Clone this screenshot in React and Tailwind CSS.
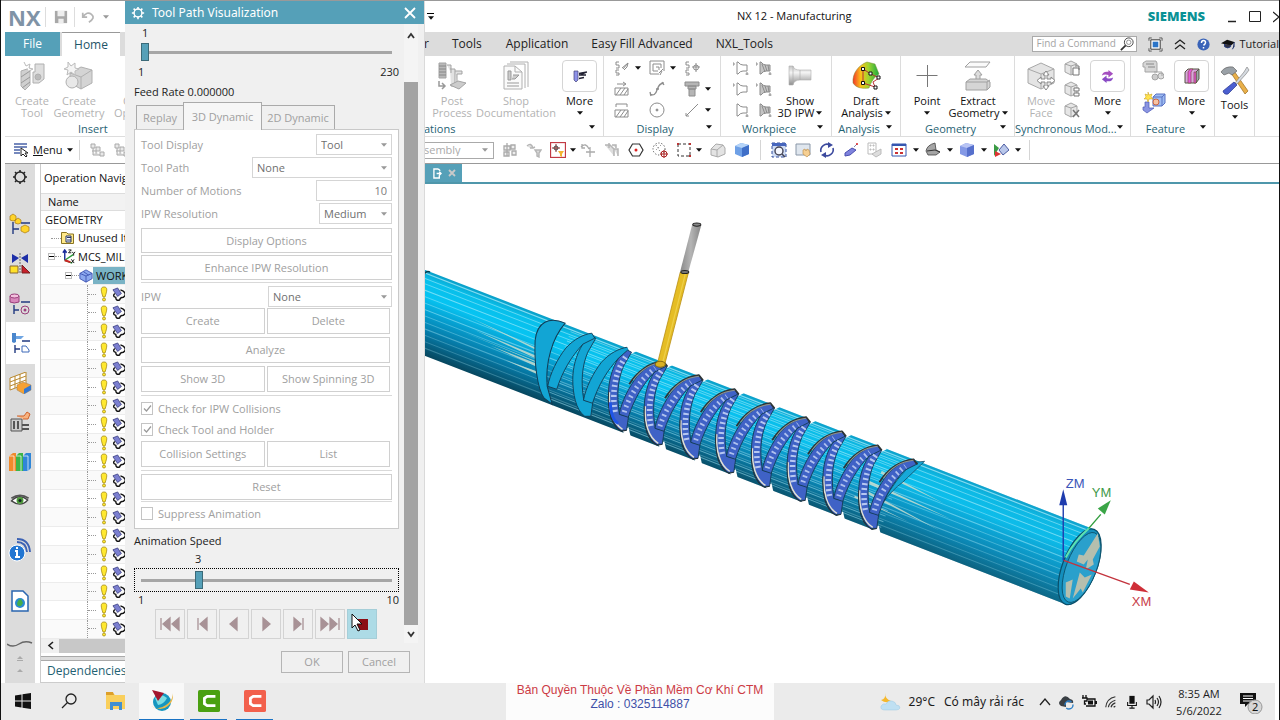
import React from "react";
import clsx from "clsx";

const Svg = ({ w = 16, h = w, vb = "0 0 16 16", className, children, ...rest }) => (
  <svg width={w} height={h} viewBox={vb} fill="none" aria-hidden="true" className={clsx("shrink-0", className)} {...rest}>
    {children}
  </svg>
);

const Caret = ({ color = "#111" }) => (
  <Svg w={6} h={4} vb="0 0 7 4"><path d="M0 0h7L3.5 4z" fill={color} /></Svg>
);

/* ---------- ribbon drawings ---------- */
const ToolBlock = () => (
  <Svg w={30} vb="0 0 30 30" stroke="#b0b0b0">
    <path d="M18 3h9v15l-5 4h-6V11h2z" fill="#dedede" /><circle cx="21" cy="16" r="3" fill="#bbb" />
    <path d="M4 10l9-3v17l-5 5-4-4z" fill="#d0d0d0" /><path d="M4 16l9-6M4 22l9-6M5 27l8-6" stroke="#999" />
    <path d="M7 1l2 4 4-2-1 4 4 1-4 2" fill="#fff" stroke="#bbb" />
  </Svg>
);
const GeoBlock = () => (
  <Svg w={30} vb="0 0 30 30" stroke="#b0b0b0">
    <path d="M6 12l11-6 11 3v13l-11 6-11-6z" fill="#d4d4d4" /><path d="M6 12l11 4 11-7M17 16v12" />
    <circle cx="8" cy="21" r="6" fill="#e8e8e8" /><path d="M4 1l3 4 4-3v5l4 1-4 2v4l-4-3-4 3 1-5-4-1 4-2z" fill="#f4f4f4" stroke="#bbb" />
  </Svg>
);
const PostIcon = () => (
  <Svg w={30} vb="0 0 30 30" stroke="#a3a3a3">
    <path d="M2 2h7v15H2z" fill="#b9b9b9" /><path d="M2 5h7M2 8h7M2 11h7M2 14h7" stroke="#888" />
    <path d="M10 4h4v8M13 8h5v17h-4M18 10h7v3h-5v9" fill="#e2e2e2" /><path d="M13 24l8-4 8 2-7 6z" fill="#ccc" />
    <path d="M2 20v5h6m-3-3l3 3-3 3" stroke="#999" strokeWidth="1.5" />
  </Svg>
);
const DocIcon = () => (
  <Svg w={30} vb="0 0 30 30" stroke="#b0b0b0">
    <path d="M9 1h18v25" /><path d="M6 3h18v24" /><path d="M3 5h11l7 6v17H3z" fill="#fafafa" /><path d="M14 5v6h7" />
    <path d="M7 10h3v9H7zM12 14h6l-4 4h-3M6 22h12M6 25h12" stroke="#999" fill="#ccc" />
  </Svg>
);
const IpwIcon = () => (
  <Svg w={26} h={22} vb="0 0 26 22">
    <defs><linearGradient id="ipw" x1="0" y1="0" x2="0" y2="1"><stop stopColor="#c4c4c4" /><stop offset=".35" stopColor="#f4f4f4" /><stop offset="1" stopColor="#8f8f8f" /></linearGradient></defs>
    <path d="M2 1h4q1 4 7 4h11v10H13q-6 0-7 5H2z" fill="url(#ipw)" stroke="#b0b0b0" strokeWidth=".6" /><path d="M6 1v19M13 5v10" stroke="#aaa" strokeWidth=".6" />
  </Svg>
);
const DraftIcon = () => (
  <Svg w={30} vb="0 0 30 30">
    <defs><linearGradient id="dr"><stop stopColor="#f3352b" /><stop offset=".3" stopColor="#fbc117" /><stop offset=".6" stopColor="#9ed530" /><stop offset="1" stopColor="#17a83e" /></linearGradient></defs>
    <path d="M2 22C1 12 8 4 16 1l8 2 4 10c-5 3-8 8-10 14-6 1-13 0-16-5z" fill="url(#dr)" stroke="#7a8c33" strokeWidth=".5" />
    <path d="M12 8v14M12 8l8 5M12 22l12 4M20 13l8 4-6 4 2 5" stroke="#b33" /><path d="M10.500 6.500h3v3h-3zM10.500 20.500h3v3h-3zM23 25h3v3h-3zM26 15h3v3h-3zM18 11h3v3h-3z" fill="#fff" stroke="#111" />
  </Svg>
);
const PointIcon = () => <Svg w={24} vb="0 0 24 24" stroke="#777"><path d="M12.500 1v22M1.500 11.500h21" /></Svg>;
const ExtractIcon = () => (
  <Svg w={30} vb="0 0 30 30" stroke="#a0a0a0">
    <path d="M7 1h20l-4 5H2z" fill="#fafafa" /><path d="M15 9l4 5h-2v7h-4v-7h-2z" fill="#ddd" />
    <path d="M3 21l4-3h16l4 3v5l-3 3H3z" fill="#d5d5d5" /><path d="M3 21h21v8M24 21l3-2" />
  </Svg>
);
const MoveFace = () => (
  <Svg w={30} vb="0 0 30 30" stroke="#a8a8a8">
    <path d="M2 8l13-6 13 6v14l-13 6-13-6z" fill="#e4e4e4" /><path d="M2 8l13 5 13-5M15 13v15" />
    <path d="M20 10l3 4h-2v4h4v-2l4 3.500-4 3.500v-2h-4v4h2l-3 4-3-4h2v-4h-4v2l-4-3.500 4-3.500v2h4v-4h-2z" fill="#fff" stroke="#888" />
  </Svg>
);
const SmallCube = ({ kind }) => (
  <Svg w={16} stroke="#a5a5a5">
    <path d="M1 4l6-3 6 3v8l-6 3-6-3z" fill="#e6e6e6" /><path d="M1 4l6 2 6-2M7 6v9" />
    {kind === 0 && <path d="M9 8h6v7H9zM11 6h4v4" fill="#fff" stroke="#777" />}
    {kind === 1 && <path d="M10 7h5v3h-5zM10 12h5v3h-5z" fill="#fff" stroke="#777" />}
    {kind === 2 && <path d="M9 8l6 7M15 8l-6 7" stroke="#777" strokeWidth="1.500" />}
  </Svg>
);
const SyncIcon = () => (
  <Svg w={15}><path d="M2 7q1-5 7-4V1l5 4-5 4V6.500Q5 5 2 7z" fill="#a54fc0" /><path d="M14 9q-1 5-7 4v2l-5-4 5-4v2.500q4 1.500 7-.5z" fill="#8a4bc5" /></Svg>
);
const FeatIcon = () => (
  <Svg w={16}><path d="M1 4l3-3h11l-3 3v11H1z" fill="#d9a7dd" stroke="#554" /><path d="M12 4l3-3v10l-3 4z" fill="#9aa" stroke="#554" /><path d="M4 4l2-3h3L7 4v11H4zM10 4h2v11h-2z" fill="#e45adb" stroke="#743" strokeWidth=".6" /></Svg>
);
const MoreMachining = () => (
  <Svg w={16}><path d="M2 3h4v9l-2 2-2-2z" fill="#8f93e8" stroke="#447" strokeWidth=".7" /><path d="M15 4L7 5.500M14 7H7M12 9.500l-5 1M15 4L8 7" stroke="#223" strokeWidth="1.300" /></Svg>
);
const FeatTop = () => (
  <Svg w={22} vb="0 0 22 22" stroke="#a5a5a5"><path d="M1 3l3-2h10l1 2v9H3V7H1z" fill="#d6d6d6" /><path d="M4 4h8M6 7h7" stroke="#888" /><circle cx="13" cy="17" r="3" fill="#ccc" /><circle cx="19" cy="16" r="3" fill="#ddd" /><path d="M12 12h8v4" /></Svg>
);
const FeatBottom = () => (
  <Svg w={24} vb="0 0 24 22"><path d="M11 6l3-3h9v9l-3 3h-9z" fill="#9dbcf2" stroke="#5a73c4" /><path d="M11 6h9v9M20 6l3-3" stroke="#5a73c4" /><circle cx="14" cy="11" r="3" fill="#f7c3a4" stroke="#c64" /><path d="M3 11h4v6h5l-7 5-4-3V16h2z" fill="#8b95e2" stroke="#4b59b5" strokeWidth=".7" /><path d="M6 1l1 3 3-1-1 3 2 2H7l-1 3-1-3H2l2-2-1-3 3 1z" fill="#ffe34d" stroke="#c59a1a" strokeWidth=".5" /></Svg>
);
const ToolsIcon = () => (
  <Svg w={30} vb="0 0 30 30">
    <path d="M11 8l3-2 14 20-3 3z" fill="#e9b04a" stroke="#9b6c1c" strokeWidth=".7" /><path d="M1 7Q5 1 13 2l4 4-5 4-3-2-5 2z" fill="#9aa1a7" stroke="#666" strokeWidth=".7" />
    <path d="M24 7l3-5 2 3-3 4-9 10-2-1z" fill="#d5dae0" stroke="#888" strokeWidth=".7" /><path d="M14 17l3 3-9 9q-4 1-5-3z" fill="#4b5fd0" stroke="#2a388e" strokeWidth=".7" />
  </Svg>
);

const G = "#8c8c8c";
const smallDisplay = [
  <Svg key="a" stroke={G}><path d="M5 2H2v3h3v3H2M5 10H2v3h3v2H2M8 8l6-5M9 9l5-6-1 4-3 3" /></Svg>,
  <Svg key="b" stroke={G}><path d="M1 1h14v10M1 1v13h9M4 4h8v4M4 4v7h5M7 7h3v3M10 13l4-4M13 11l-2 4" /></Svg>,
  <Svg key="c" stroke={G}><path d="M5 2H2v3h3v3H2M5 10H2v3h3v2H2M12 3v9M8 7h8" /><circle cx="12" cy="7.500" r="2.500" /></Svg>,
  <Svg key="d" stroke={G}><path d="M3 3h8M9 1l3 2-3 2M1 7h13v7H1zM2 14l5-7M6 14l5-7M10 14l4-6" /></Svg>,
  <Svg key="e" stroke={G} strokeWidth="1.300"><path d="M1 13q5 3 7-4t7-7M13 1l2 3M1 11l1 4M7 8h3" /></Svg>,
  <Svg key="f" stroke={G}><path d="M1 1h14v4H1zM4 5h8v3H4zM5 8h6v7H5z" fill="#b5b5b5" /></Svg>,
  <Svg key="g" stroke={G}><path d="M2 5V2h11v3M1 8h13v7H1zM2 15l5-7M6 15l5-7M10 15l4-6" /></Svg>,
  <Svg key="h" stroke={G}><circle cx="8" cy="8" r="7" /><circle cx="8" cy="8" r="1" fill={G} /></Svg>,
  <Svg key="i" stroke={G}><path d="M2 14L14 2M2 11v3h3" /></Svg>,
];
const Funnel = ({ arrow, hatch, tail }) => (
  <Svg stroke={G}>
    {arrow && <path d="M0 2v4M0 4h2" />}
    <path d="M4 2h1q2 3 5 3h4v6h-4q-3 0-5 3H4z" fill={hatch ? "#c4c4c4" : "none"} />
    {hatch && <path d="M6 4l3 8M9 5l2 6M12 5l1 6" />}{tail && <path d="M14 12v3M12.500 14h3" />}
  </Svg>
);

/* ---------- ribbon parts ---------- */
const Big = ({ icon, lines, caret, off, className }) => (
  <button type="button" disabled={off} className={clsx("flex shrink-0 flex-col items-center text-[11px] leading-3", off ? "text-[#b3b3b3]" : "text-[#111]", className)}>
    <span className="flex h-8 items-center justify-center">{icon}</span>
    <span className="mt-[3px] whitespace-nowrap">{lines[0]}</span>
    {lines[1] ? <span className="flex items-center gap-0.5 whitespace-nowrap">{lines[1]}{caret && <Caret />}</span> : caret && <span className="mt-1"><Caret /></span>}
  </button>
);
const More = ({ icon, className }) => (
  <button type="button" className={clsx("flex shrink-0 flex-col items-center text-[11px] leading-3 text-[#111]", className)}>
    <span className="flex h-8 w-[35px] items-center justify-center rounded border border-[#d5d5d5] bg-white">{icon}</span>
    <span className="mt-[3px]">More</span>
    <span className="mt-1"><Caret /></span>
  </button>
);
const Group = ({ label, caret = true, className, labelClass, children }) => (
  <section className={clsx("flex h-full shrink-0 flex-col border-r border-[#dcdcdc] pt-1", className)}>
    <div className="flex flex-1 items-start gap-1">{children}</div>
    <div className="flex h-[14px] items-center whitespace-nowrap text-[11px] text-[#1f6273]">
      <span className={clsx("flex-1 text-center", labelClass)}>{label}</span>
      {caret && <span className="flex pr-2 pb-1"><Caret /></span>}
    </div>
  </section>
);

/* ---------- quick toolbar ---------- */
const Cell = ({ children, label }) => <button type="button" aria-label={label} className="flex h-6 w-6 shrink-0 items-center justify-center">{children}</button>;
const Drop = ({ wide }) => <span className={clsx("flex shrink-0 justify-center", wide ? "w-2.5" : "w-1.5")}><Caret /></span>;
const VBar = () => <span className="mx-[6px] h-5 w-px shrink-0 bg-[#d5d5d5]" />;
const Cube = ({ a = "#b5d4f8", b = "#6ea0e6", c = "#3f6fc8" }) => (
  <Svg><path d="M1 4l6-3 8 2v9l-7 3-7-3z" fill={b} /><path d="M1 4l6-3 8 2-7 3z" fill={a} /><path d="M8 6l7-3v9l-7 3z" fill={c} /></Svg>
);

const quick = {
  tree: <Svg stroke="#aaa"><path d="M1 2h4v4H1zM6 5h4v4H6zM10 10h4v4h-4zM3 6v7h7M2 9h4v3" fill="#e8e8e8" /></Svg>,
  sel: <Svg stroke="#aaa" strokeWidth="1.300"><path d="M5 1v13M2 4h6v4H2zM2 10h5v4H2zM9 3h4v4H9zM10 9h4v4h-4z" fill="#eee" /></Svg>,
  hook: <Svg stroke="#b5b5b5" strokeWidth="1.400"><path d="M1 4q4-4 6 2L4 6M7 6l2-1M9 8h6l-2 3v4l-2-1v-3z" fill="#ddd" /></Svg>,
  boxed: <Svg><rect x=".5" y=".5" width="15" height="15" fill="#fff" stroke="#c23b45" strokeWidth="1.300" /><path d="M6 2v8M2 6h8" stroke="#8a2b2b" /><circle cx="6" cy="6" r="2" stroke="#444" /><path d="M8 9h6l-2 3v3l-2-1v-2z" fill="#f3b431" /></Svg>,
  arc: <Svg stroke="#aaa" strokeWidth="1.300"><path d="M1 5q5-5 8 2M2 2v4h3M10 5v10M6 10h9" /></Svg>,
  pipe: <Svg stroke="#b5b5b5" strokeWidth="1.500"><path d="M1 3h5l4 4v7M5 1v5M10 7h4v7M8 3h4v3" fill="#ddd" /></Svg>,
  hex: <Svg><path d="M4.500 2h7L15 8l-3.500 6h-7L1 8z" stroke="#333" strokeWidth="1.200" /><circle cx="8" cy="8" r="1.500" fill="#d22" /></Svg>,
  dots: <Svg><circle cx="7" cy="7" r="6" stroke="#333" strokeDasharray="1 2" /><path d="M4 3l5 8M9 3L3 9" stroke="#777" strokeDasharray="1 2" /><circle cx="12" cy="12" r="3" stroke="#a22" /><path d="M12 8v8M8 12h8" stroke="#a22" /></Svg>,
  rect: <Svg><rect x="2" y="2" width="12" height="12" stroke="#333" strokeDasharray="3 2" /><path d="M1 1h2v2H1zM13 13h2v2h-2zM13 1h2v2h-2z" fill="#b33" /></Svg>,
  gcube: <Svg stroke="#aaa"><path d="M1 7l5-5 7 1 2 3v6l-7 3-7-2z" fill="#e3e3e3" /><path d="M1 7l6 1 6-5M7 8v7" /></Svg>,
  fit: <Svg><path d="M1 1h14v14H1z" fill="#cfdcf4" stroke="#334f9c" strokeDasharray="3 2" /><path d="M1 1h14v3H1z" fill="#4766bd" /><circle cx="8" cy="9" r="4" fill="#f5f8ff" stroke="#445" strokeWidth="1.400" /><path d="M11 12l3 3" stroke="#445" strokeWidth="1.500" /></Svg>,
  hand: <Svg><path d="M1 2h14v11H1z" fill="#dfe6ee" stroke="#8a97a8" /><path d="M8 8l2-1 1 2 1-2 2 1 1 4-3 3-4-3z" fill="#f6cf92" stroke="#b98a45" strokeWidth=".6" /></Svg>,
  rot: <Svg stroke="#3c4a9e" strokeWidth="1.600"><path d="M2 10A6.200 6.200 0 0 1 11 3M14 6a6.200 6.200 0 0 1-9 7" /><path d="M9 0l5 3-5 3zM7 16l-5-3 5-3z" fill="#3c4a9e" stroke="none" /></Svg>,
  pen: <Svg><path d="M2 11l7-5 4 2-6 5-5 1z" fill="#7f83dd" stroke="#4a4fb0" /><path d="M11 5l3-3" stroke="#88a" /><circle cx="14" cy="2" r="1" fill="#d22" /></Svg>,
  gdoc: <Svg stroke="#bbb"><path d="M1 1h8v11H1z" fill="#fff" /><path d="M3 3h1v1H3zM6 3h1v1H6zM3 7h1v1H3zM6 7h1v1H6zM5 12l9-5v5l-5 3z" fill="#ddd" /></Svg>,
  grid: <Svg><path d="M1 2h14v12H1z" fill="#fff" stroke="#3556b0" /><path d="M1 2h14v2H1z" fill="#3556b0" /><path d="M4 6h3v2H4zM9 6h3v2H9zM4 10h3v2H4zM9 10h3v2H9z" fill="#c33" /></Svg>,
  dark: <Svg><path d="M1 9q1-6 9-8l1 7 4 2-4 3H3z" fill="#a5a5a5" stroke="#444" strokeWidth=".8" /><path d="M2 9l8-1 5 2" stroke="#333" /></Svg>,
  tri: <Svg><path d="M1 2l5 4-5 8z" fill="#3a9a44" /><path d="M2 9l6 3-6 3z" fill="#d33" /><path d="M11 2l5 6-6 5-4-5z" fill="#b9c7ea" stroke="#4a5aa0" /></Svg>,
};

/* ---------- resource bar ---------- */
const barIcons = [
  ["Roles settings", "h-[26px]", <Svg key="s" stroke="#222"><circle cx="8" cy="8" r="5" strokeWidth="1.500" /><path d="M8 1v2M8 13v2M1 8h2M13 8h2M3 3l1.500 1.500M11.500 11.500L13 13M3 13l1.500-1.500M11.500 4.500L13 3" strokeWidth="1.500" /></Svg>],
  ["Assembly navigator", "mt-4 h-9", <Svg key="1" w={22} vb="0 0 22 22"><path d="M1 3l3-2 3 2v4L4 8 1 7zM6 7l3-2 3 2v3l-3 1-3-1zM12 14l4-2 4 2v4l-4 2-4-2z" fill="#ffd42a" stroke="#a97a10" strokeWidth=".7" /><path d="M4 9v12M4 16h6M12 10h9" stroke="#223a80" strokeWidth="1.400" /></Svg>],
  ["Constraint navigator", "mt-1 h-9", <Svg key="2" w={22} vb="0 0 22 22"><path d="M3 1l7 4-7 5zM19 1l-7 4 7 5z" fill="#1d2fa8" /><path d="M11 0v21" stroke="#666" strokeDasharray="2 1" /><path d="M1 13h8v7H1z" fill="#ffe12a" stroke="#863" /><path d="M13 12v8h8z" fill="#c8202a" stroke="#722" /></Svg>],
  ["Part navigator", "mt-1 h-9", <Svg key="3" w={22} vb="0 0 22 22"><path d="M1 3v6q4 2 9 0V3" fill="#d888bb" stroke="#9a3e7b" /><ellipse cx="5.500" cy="3" rx="4.500" ry="2" fill="#f3c0dd" stroke="#9a3e7b" /><path d="M12 9h9M5 12v9M5 17h5" stroke="#223a80" strokeWidth="1.400" /><circle cx="16" cy="17" r="4" stroke="#9a3e7b" /><circle cx="16" cy="17" r="1.500" fill="#9a3e7b" /></Svg>],
  ["Operation navigator", "h-[42px]", <Svg key="4" w={22} vb="0 0 22 22"><path d="M2 1h4v9l-2 1-2-1z" fill="#4a86cc" /><path d="M6 4h8l-3 3H6z" fill="#6fa5e2" /><path d="M12 9h8M5 13v8M5 17h5" stroke="#223a80" strokeWidth="1.400" /><path d="M12 14h4l3 4v2h-7z" stroke="#3c68b8" /></Svg>, true],
  ["Machine tool navigator", "h-[38px]", <Svg key="5" w={24} h={22} vb="0 0 24 22"><path d="M2 6l16-6v12L2 18z" fill="#fff" stroke="#b8872c" /><path d="M2 10l16-6M2 14l16-6M7 4v12M12 2v12" stroke="#b8872c" /><path d="M9 13l6-3 8 3v5l-7 4-7-4z" fill="#f5a133" stroke="#a85" strokeWidth=".6" /><path d="M16 17l7-4v5l-7 4z" fill="#3478d0" /></Svg>],
  ["Machining wizard", "h-[40px]", <Svg key="6" w={22} vb="0 0 22 22" stroke="#555"><path d="M2 8h11v12H2z" fill="#ccc" /><path d="M5 10v8M9 10v8M13 14h7M13 18h7" strokeWidth="2" /><path d="M8 5h7l3-4 3 2-2 5h-5" stroke="#d0622a" fill="#f7b280" /></Svg>],
  ["Library", "h-[40px]", <Svg key="7" w={24} h={22} vb="0 0 24 22"><path d="M1 5l4-3h3v18H1z" fill="#f08a2b" /><path d="M8 5l3-3h4v18H8z" fill="#3cb549" /><path d="M15 5l3-3h5v15l-3 3h-5z" fill="#2f86d8" /><path d="M1 5h5v15M8 5h5v15M15 5h5v15" stroke="#fff" strokeWidth=".7" /></Svg>],
  ["View section", "h-[36px]", <Svg key="8" w={20} h={12} vb="0 0 22 14"><path d="M1 8q9-9 19-1-8 9-19 1z" fill="#fff" stroke="#444" strokeWidth="1.500" /><path d="M1 5q10-7 20 0" stroke="#555" strokeWidth="2" /><circle cx="11" cy="7.500" r="4" fill="#4d9a3a" /><circle cx="11" cy="7.500" r="1.800" fill="#122" /></Svg>],
  ["Information", "h-[64px]", <Svg key="9" w={24} vb="0 0 24 24"><circle cx="9" cy="15" r="8" fill="#2276d2" stroke="#fff" /><path d="M9 9v2M7 13h2v6M7 19h5" stroke="#fff" strokeWidth="2" /><path d="M9 4q9 0 10 10M9 1q12 0 13 13" stroke="#3c62b4" strokeWidth="1.800" /></Svg>],
  ["Web page", "h-[38px]", <Svg key="10" w={20} h={22} vb="0 0 20 22"><path d="M2 1h11l5 5v15H2z" fill="#fff" stroke="#2a66b0" strokeWidth="1.500" /><circle cx="10" cy="13" r="5" fill="#2a8bd0" /><path d="M7 14q1-5 4-5l2 4-2 3H8z" fill="#44ad4a" /></Svg>],
];

/* ---------- tree ---------- */
const OpRow = () => (
  <li className="flex min-h-0 items-center border-b border-[#ececec] pl-[46px] odd:bg-[#fafafa]">
    <span className="h-full border-l border-dotted border-[#999]" />
    <span className="mr-1 w-2 border-t border-dotted border-[#999]" />
    <Svg w={8} h={16} vb="0 0 8 16"><path d="M4 1c4 0 3 4 1 10H3C1 5 0 1 4 1z" fill="#ffe830" stroke="#a58b12" strokeWidth=".8" /><circle cx="4" cy="13.500" r="1.500" fill="#ffe830" stroke="#a58b12" strokeWidth=".8" /></Svg>
    <Svg w={15} className="ml-1"><path d="M3 7q-3 3 1 4 0 4 4 3 1-3 4-3 3-2 2-4-1-3-5-4" stroke="#111" strokeWidth="1.500" /><path d="M1 3l5-2 4 6-4 3z" fill="#7b7fd0" stroke="#33377a" strokeWidth=".8" /></Svg>
  </li>
);
const Minus = () => <span className="flex h-[7px] w-[7px] items-center justify-center border border-[#bbb] bg-white"><span className="h-px w-[5px] bg-black" /></span>;

/* ---------- dialog parts ---------- */
const DBtn = ({ className, children }) => <button type="button" disabled className={clsx("border border-[#d0d0d0] bg-white text-[#a0a0a0]", className)}>{children}</button>;
const Pick = ({ id, label, value, className }) => (
  <div className="flex h-[21px] items-center justify-between">
    <label htmlFor={id} className="text-[#a0a0a0]">{label}</label>
    <span className={clsx("relative flex h-full", className)}>
      <select id={id} disabled className="h-full w-full appearance-none border border-[#d5d5d5] bg-white pl-1 text-[#6f6f6f] opacity-100">
        <option>{value}</option>
      </select>
      <span className="pointer-events-none absolute inset-y-0 right-[5px] flex items-center"><Caret color="#999" /></span>
    </span>
  </div>
);
const Tick = ({ id, label, on }) => (
  <div className="flex h-[21px] items-center gap-[5px]">
    <span className="relative flex h-[13px] w-3">
      <input id={id} type="checkbox" disabled defaultChecked={on} className="h-[13px] w-3 appearance-none border border-[#c4c4c4] bg-white" />
      {on && <span className="pointer-events-none absolute inset-0 flex items-center justify-center"><Svg w={9} vb="0 0 9 9" stroke="#999"><path d="M1 4.500L3.500 7 8 1.500" strokeWidth="1.200" /></Svg></span>}
    </span>
    <label htmlFor={id} className="text-[#a0a0a0]">{label}</label>
  </div>
);
const Rule = ({ className }) => <hr className={clsx("border-[#d9d9d9]", className)} />;
const Track = ({ id, label, ...rest }) => (
  <span className="relative block">
    <span className="absolute inset-x-0 top-[8px] h-[3px] bg-[#a6a6a6]" />
    <input id={id} aria-label={label} type="range" {...rest} className="relative block h-[18px] w-full appearance-none bg-transparent outline-none [&::-webkit-slider-thumb]:h-[18px] [&::-webkit-slider-thumb]:w-2 [&::-webkit-slider-thumb]:appearance-none [&::-webkit-slider-thumb]:border [&::-webkit-slider-thumb]:border-[#3b6a78] [&::-webkit-slider-thumb]:bg-[#55a0b8]" />
  </span>
);
const playIcons = [
  ["Rewind", "M1 4v12M10 4v12l-7-6zM19 4v12l-7-6z"],
  ["Step back", "M6 4v12M15 4v12l-7-6z"],
  ["Play backward", "M13 4v12l-7-6z"],
  ["Play", "M7 4v12l7-6z"],
  ["Step", "M6 4v12l7-6zM15 4v12"],
  ["Fast forward", "M1 4v12l7-6zM10 4v12l7-6zM19 4v12"],
];

function Dialog() {
  return (
    <div role="dialog" aria-label="Tool Path Visualization" className="absolute inset-y-0 left-[124px] flex w-[300px] flex-col border-r border-[#dadada] bg-[#f0f0f0] text-[11px] leading-4 text-[#222]">
      <header className="flex h-[23px] shrink-0 items-center bg-[#55a0b8] pr-2 pl-[6px] text-white">
        <Svg w={14} stroke="#fff"><circle cx="8" cy="8" r="4.500" strokeWidth="1.600" /><path d="M8 1v3M8 12v3M1 8h3M12 8h3M3 3l2 2M11 11l2 2M3 13l2-2M11 5l2-2" strokeWidth="1.800" /></Svg>
        <h1 className="ml-[7px] flex-1 font-['Noto_Sans',sans-serif] text-xs">Tool Path Visualization</h1>
        <button type="button" aria-label="Close"><Svg w={12} vb="0 0 12 12" stroke="#fff"><path d="M1 1l10 10M11 1L1 11" strokeWidth="1.800" /></Svg></button>
      </header>
      <div className="flex min-h-0 flex-1">
        <div className="ml-[9px] w-[265px] pt-px">
          <div className="px-[7px]">
            <div className="pl-px">1</div>
            <div className="mt-0.5"><Track id="motion" label="Motion" min="1" max="230" defaultValue="1" /></div>
          </div>
          <div className="mt-[3px] flex justify-between pl-1"><span>1</span><span>230</span></div>
          <p className="mt-1">Feed Rate 0.000000</p>
          <div role="tablist" className="flex h-[29px] items-end pl-0.5 text-[#a0a0a0]">
            <button role="tab" type="button" disabled className="h-6 w-12 border border-b-0 border-[#aaa]">Replay</button>
            <button role="tab" type="button" disabled aria-selected="true" className="-ml-px -mb-px h-[28px] w-[79px] border border-b-0 border-[#aaa] bg-[#f6f6f6]">3D Dynamic</button>
            <button role="tab" type="button" disabled className="-ml-px h-6 w-[74px] border border-b-0 border-[#aaa]">2D Dynamic</button>
          </div>
          <div role="tabpanel" className="border border-[#c9c9c9] bg-white px-1.5 pt-1 pb-1">
            <div className="flex flex-col gap-0.5">
              <Pick id="tool-display" label="Tool Display" value="Tool" className="w-[76px]" />
              <Pick id="tool-path" label="Tool Path" value="None" className="w-[140px]" />
              <div className="flex h-[21px] items-center justify-between">
                <label htmlFor="motions" className="text-[#a0a0a0]">Number of Motions</label>
                <input id="motions" disabled defaultValue="10" className="h-full w-[76px] border border-[#d5d5d5] bg-white px-1 text-right text-[#7c7c7c]" />
              </div>
              <Pick id="ipw-res" label="IPW Resolution" value="Medium" className="w-[73px]" />
            </div>
            <DBtn className="mt-1 h-[25px] w-full">Display Options</DBtn>
            <DBtn className="mt-0.5 h-[25px] w-full">Enhance IPW Resolution</DBtn>
            <Rule className="mt-0.5 mb-[3px]" />
            <Pick id="ipw" label="IPW" value="None" className="w-[124px]" />
            <div className="mt-px grid grid-cols-2 gap-0.5 pr-0.5"><DBtn className="h-[26px]">Create</DBtn><DBtn className="h-[26px]">Delete</DBtn></div>
            <div className="mt-[3px] pr-0.5"><DBtn className="h-[26px] w-full">Analyze</DBtn></div>
            <div className="mt-[3px] grid grid-cols-2 gap-0.5 pr-0.5"><DBtn className="h-[26px]">Show 3D</DBtn><DBtn className="h-[26px]">Show Spinning 3D</DBtn></div>
            <Rule className="mt-[3px] mb-0.5" />
            <Tick id="chk-ipw" label="Check for IPW Collisions" on />
            <Tick id="chk-tool" label="Check Tool and Holder" on />
            <div className="mt-px grid grid-cols-2 gap-0.5 pr-0.5"><DBtn className="h-[26px]">Collision Settings</DBtn><DBtn className="h-[26px]">List</DBtn></div>
            <Rule className="my-[3px]" />
            <DBtn className="h-[26px] w-full">Reset</DBtn>
            <Rule className="my-px" />
            <Tick id="suppress" label="Suppress Animation" />
          </div>
          <p className="mt-1">Animation Speed</p>
          <div className="mt-0.5 pl-[61px]">3</div>
          <div className="mt-px border border-dotted border-black px-1.5 py-0.5"><Track id="speed" label="Animation Speed" min="1" max="10" defaultValue="3" /></div>
          <div className="flex justify-between pl-1"><span>1</span><span>10</span></div>
          <div className="mt-px flex gap-0.5 pl-[21px]">
            {playIcons.map(([name, d]) => (
              <button key={name} type="button" disabled aria-label={name} className="flex h-[30px] w-[30px] shrink-0 items-center justify-center border border-[#d3d3d3]">
                <Svg w={20} vb="0 0 20 20" className="overflow-visible"><path d={d} fill="#a89296" stroke="#a89296" strokeWidth="1.300" /></Svg>
              </button>
            ))}
            <button type="button" aria-label="Stop" className="relative flex h-[30px] w-[30px] shrink-0 items-center justify-center border border-[#a5ced8] bg-[#addbe6]">
              <span className="h-[11px] w-[11px] bg-[#8b0d14]" />
              <span className="pointer-events-none absolute top-[3px] left-[3px]"><Svg w={12} h={19} vb="0 0 12 19"><path d="M1 1v14l3-3 3 6 2-1-3-6h5z" fill="#fff" stroke="#111" /></Svg></span>
            </button>
          </div>
        </div>
        <div className="ml-[5px] flex h-[619px] w-[14px] flex-col items-center bg-[#f4f4f4]">
          <Svg w={8} className="my-2" vb="0 0 8 8" stroke="#333"><path d="M1 6l3-4 3 4" strokeWidth="1.800" /></Svg>
          <span className="mt-[34px] w-full flex-1 bg-[#a3a3a3]" />
          <Svg w={8} className="my-[5px]" vb="0 0 8 8" stroke="#333"><path d="M1 2l3 4 3-4" strokeWidth="1.800" /></Svg>
        </div>
      </div>
      <footer className="flex shrink-0 justify-end gap-[5px] pr-[14px] pb-2.5">
        <button type="button" disabled className="h-[22px] w-[62px] border border-[#b5b5b5] text-[#a0a0a0]">OK</button>
        <button type="button" disabled className="h-[22px] w-[62px] border border-[#b5b5b5] text-[#a0a0a0]">Cancel</button>
      </footer>
    </div>
  );
}

/* ---------- graphics area ---------- */
const bandA = "M-48 50C-46 38-38 22-30 12-22 3-12-2-4-3L-1 2-13 8C-24 20-33 34-39 53z";
const bandB = "M-13 8C-20 19-23 32-23 43-23 57-20 74-11 80L-5 80-3 66-12 64C-15 46-14 30-8 16L0 2-4 0z";
const step = (k) => `translate(${668 + 35.7 * k} ${364 + 14 * k})`;
function Cut({ k, a = true, b = true, deep = true }) {
  const fill = deep ? "#3f62c6" : "#12a5d4";
  return (
    <g transform={step(k)} strokeLinejoin="round">
      {deep && b && <path d="M-6-7L2-4 5 1-1 4z" fill="#fff" />}
      {deep && b && <path d="M-9 80l6-3 2 9-6-1z" fill="#fff" />}
      {b && <path d={bandB} fill={fill} stroke="#123c55" strokeWidth=".9" />}
      {a && <path d={bandA} fill={fill} stroke="#123c55" strokeWidth=".9" />}
      {deep && a && <path d="M-43 48C-38 32-28 16-12 4" stroke="#dfeaff" strokeWidth="5" strokeDasharray="1.800 3.600" opacity=".7" />}
      {deep && b && <path d="M-6 7C-17 22-20 44-16 64" stroke="#dfeaff" strokeWidth="5.500" strokeDasharray="2 3" opacity=".75" />}
      {deep && a && <path d="M-38 20C-30 7-17-2-4-3l4 5" stroke="#2d3436" strokeWidth="1.800" />}
      {deep && a && <path d="M-34 16C-26 5-15-1-4-2" stroke="#8f948c" strokeWidth="1" />}
      {deep && b && <path d="M-22 42C-23 58-19 73-9 79" stroke="#e3e0d2" strokeWidth="1.500" />}
      {deep && b && <path d="M-23 42C-24 60-21 75-10 81l5-1" stroke="#24303a" strokeWidth="1" />}
    </g>
  );
}
const grooves = [0, 1, 2, 3, 4, 5, 6];
const bright = [3, 8, 13, 19, 25, 31, 37, 43, 49, 55, 61, 67, 73];
function Scene() {
  return (
    <svg viewBox="425 184 854 498" preserveAspectRatio="xMinYMin meet" fill="none" className="block h-full w-full" role="img" aria-label="Machined shaft">
      <defs>
        <linearGradient id="shaft" x1="0" y1="0" x2="0" y2="1">
          <stop stopColor="#0a9fc8" /><stop offset=".1" stopColor="#08bfea" /><stop offset=".3" stopColor="#06c4f2" /><stop offset=".5" stopColor="#069fd0" /><stop offset=".72" stopColor="#067ba8" /><stop offset="1" stopColor="#07475f" />
        </linearGradient>
        <linearGradient id="shaftR" x1="0" y1="0" x2="1" y2="0"><stop offset=".3" stopColor="#1aa9d6" stopOpacity="0" /><stop offset="1" stopColor="#1aa9d6" stopOpacity=".35" /></linearGradient>
        <linearGradient id="hold" x1="0" y1="0" x2="1" y2="0"><stop stopColor="#8a8a8a" /><stop offset=".5" stopColor="#b5b5b5" /><stop offset="1" stopColor="#858585" /></linearGradient>
      </defs>
      <g transform="translate(424 269) rotate(21.2)">
        <path d="M-40 0H720A15 40 0 0 1 720 80H-40z" fill="url(#shaft)" />
        <path d="M-40 0H720V80H-40z" fill="url(#shaftR)" />
        <g stroke="#b5f0fc">
          {bright.map((v, i) => <path key={v} d={`M-40 ${v}H712`} strokeWidth={i % 3 ? 0.7 : 1.1} opacity={0.7 - i * 0.035} />)}
          {bright.map((v) => <path key={v} d={`M160 ${v + 2}H520`} strokeWidth=".9" opacity=".5" />)}
        </g>
        <g fill="#c8ddcf" opacity=".85">
          <path d="M60 28L142 33v2zM70 38l74 2v3zM90 47l56 0v3zM110 55l40-1v3zM60 44l86 1v1z" />
          <path d="M500 22l70 8-70-5zM492 36l90 6-90-3zM486 45l90 12-90-9zM484 55l60 5-60-3z" />
        </g>
        <ellipse cx="719" cy="40" rx="17" ry="40" fill="#148fbd" stroke="#0b4f6a" strokeWidth="1.200" />
        <ellipse cx="721" cy="40" rx="15" ry="37" fill="#2aa0cc" stroke="#0b5069" strokeWidth=".8" />
      </g>
      <g fill="#b5bfae"><path d="M1098 533l-14 22-5-1-2 7 7 3 4-5-2 10 8-5-1-5 7-13z" /><path d="M1080 572l-7 26 8-10 2 4 9-18-7 3z" /><path d="M1066 582l7-3-3 19-4-2z" /></g>
      <path d="M536 340C538 322 550 316 566 323 553 338 546 362 548 386L553 404 545 398C538 388 535 362 536 340z" fill="#12a5d4" stroke="#123c55" />
      <Cut k={-2} deep={false} />
      <Cut k={-1} b={false} deep={false} />
      <Cut k={-1} a={false} />
      <path d="M611 402q1 18 8 21" stroke="#1f55e8" strokeWidth="3" />
      {grooves.map((k) => <Cut key={k} k={k} />)}
      <path d="M925 461l-10 1q-18 14-32 41 10-14 20-21z" fill="#17a9d8" stroke="#123c55" strokeWidth=".7" />
      <Cut k={7} b={false} />
      <path d="M425 274q3-4 6-2" stroke="#083c4d" strokeWidth="1.500" />
      <path d="M693 224l9 1-13 47-8-1z" fill="url(#hold)" /><ellipse cx="697.500" cy="224.500" rx="4" ry="1.600" fill="#888" stroke="#222" />
      <path d="M681 272l8 1-24 93-7-2z" fill="#e5bd25" stroke="#b98f14" strokeWidth=".8" /><path d="M686 274l-23 90" stroke="#efd04a" strokeWidth="1.200" />
      <ellipse cx="685.500" cy="272" rx="4" ry="1.500" fill="#777" stroke="#222" /><ellipse cx="661" cy="364" rx="5" ry="3" fill="#d9b124" stroke="#8a6c10" />
      <g strokeWidth="1.400">
        <path d="M1063.500 560V500" stroke="#1f3cae" /><path d="M1063.500 489l4 16h-8z" fill="#1f3cae" />
        <path d="M1066 557q8-16 24-30" stroke="#5de3b0" strokeWidth="2" /><path d="M1089 528l12-14" stroke="#2f9c3c" /><path d="M1111 500l-6 14-7-6z" fill="#3aa547" />
        <path d="M1064 560l66 24" stroke="#c3333d" /><path d="M1149 592l-19-3 4-8z" fill="#cf2f38" />
      </g>
      <g fontFamily="'Liberation Sans', sans-serif" fontSize="13">
        <text x="1066" y="488" fill="#3a55b8">ZM</text><text x="1092" y="497" fill="#3f9a4a">YM</text><text x="1132" y="606" fill="#c8404a">XM</text>
      </g>
    </svg>
  );
}

/* ---------- taskbar ---------- */
const Camtasia = ({ color }) => (
  <Svg w={22} vb="0 0 24 24"><rect width="24" height="24" rx="2" fill={color} /><path d="M19 7H10L7 9v6l3 2h9" stroke="#fff" strokeWidth="3" /></Svg>
);
const Task = ({ label, children, on, className }) => (
  <button type="button" aria-label={label} className={clsx("flex h-[38px] shrink-0 items-center justify-center border-b-2", on ? "border-b-[#1a73c4]" : "border-b-transparent", className)}>{children}</button>
);

function Taskbar() {
  return (
    <footer className="flex h-[38px] shrink-0 items-center border-r-4 border-white bg-[#ebebeb] text-xs text-[#1c1c1c]">
      <Task label="Start" className="w-11"><Svg><path d="M0 2.500l6.500-1v6H0zM7.500 1.300L16 0v7.500H7.500zM0 8.500h6.500v6L0 13.600zM7.500 8.500H16V16l-8.500-1.200z" fill="#111" /></Svg></Task>
      <Task label="Search" className="w-12"><Svg stroke="#222" strokeWidth="1.300"><circle cx="10" cy="6" r="5" /><path d="M6.500 9.500L1 15" /></Svg></Task>
      <Task label="Explorer" className="w-[46px]"><Svg w={22} h={20} vb="0 0 22 20"><path d="M1 2h7l2 2h10v14H1z" fill="#f9cf5c" /><path d="M1 1h7l1 3H1z" fill="#dd9f2a" /><path d="M5 11h12v8h-3v-4H8v4H5z" fill="#3f8fd2" /></Svg></Task>
      <Task label="NX" on className="w-[45px] bg-[#f8f8f8]">
        <Svg w={24} vb="0 0 24 24"><circle cx="12" cy="13" r="9" fill="#1596c0" /><path d="M5 9q5-6 12 0-3 6-9 7z" fill="#7ddde2" /><path d="M1 17q7 5 15-1T22 4q3 7-4 13T1 17z" fill="#e8b84a" /><path d="M2 1l12 3-6 8z" fill="#a3162e" /></Svg>
      </Task>
      <Task label="Camtasia" on className="ml-1.5 w-[37px]"><Camtasia color="#4aa011" /></Task>
      <Task label="Recorder" on className="ml-[9px] w-[37px]"><Camtasia color="#f2604c" /></Task>
      <div className="ml-[233px] flex h-full w-[268px] shrink-0 flex-col items-center bg-[#fcfcfc] font-['Liberation_Sans',sans-serif] leading-[14px]">
        <span className="whitespace-nowrap text-[#cc3a44]">Bản Quyền Thuộc Về Phần Mềm Cơ Khí CTM</span>
        <span className="text-[#4050a8]">Zalo : 0325114887</span>
      </div>
      <div className="ml-auto flex h-full items-center whitespace-nowrap">
        <Svg w={22} h={20} vb="0 0 22 20"><path d="M6 1q0 6 6 8-5 3-10-1 5-1 4-7z" fill="#f5b82c" /><path d="M6 18q-5 0-4-4 2-3 5-2 2-4 6-3t4 4q4 0 4 3-1 2-4 2z" fill="#bfe0f2" stroke="#9fc8e0" strokeWidth=".5" /></Svg>
        <span className="ml-2 font-['Noto_Sans',sans-serif]">29°C</span><span className="ml-[9px] font-['Noto_Sans',sans-serif]">Có mây rải rác</span>
        <div className="ml-[15px] flex items-center gap-[7px]">
          <Svg w={12} vb="0 0 12 12" stroke="#222"><path d="M1 9l5-6 5 6" strokeWidth="1.300" /></Svg>
          <Svg><path d="M3 12Q-1 9 3 6q4-7 9-1 4 1 3 4l-7-1v5z" fill="#3a3f44" /><circle cx="11" cy="11" r="4" stroke="#2a7fc8" strokeWidth="1.400" strokeDasharray="9 3" /></Svg>
          <Svg><path d="M2 1v3M5 1v3M1 4h5v3H3.500v3H5M6 5h8v7H5" stroke="#111" strokeWidth="1.300" /><path d="M7 6.500h5v4H7zM14 7h2v3h-2z" fill="#111" /></Svg>
          <Svg w={14} stroke="#333" strokeWidth="1.300"><path d="M2 14Q3 4 13 2M5 14Q6 8 13 6M8 14q1-4 5-5M11 14q1-1 2-1" /></Svg>
          <Svg w={14}><path d="M5 1h6v9H5z" fill="#111" /><path d="M3 8v4h10V8M8 12v3M5 15h6" stroke="#111" strokeWidth="1.200" /></Svg>
          <Svg stroke="#222" strokeWidth="1.200"><path d="M1 6h2l4-4v12l-4-4H1zM9 6q1 2 0 4M11 4q3 4 0 8M13 2q4 6 0 12" /></Svg>
        </div>
        <div className="ml-1 w-[66px] text-center text-[11px] leading-[17px]"><div>8:35 AM</div><div>5/6/2022</div></div>
        <button type="button" aria-label="2 notifications" className="mr-3 ml-[7px] flex h-full items-center"><Svg w={24} vb="0 0 24 24"><path d="M1 3h16v11H9l-3 3v-3H1z" fill="#111" /><path d="M4 6h10M4 8.500h10M4 11h10" stroke="#fff" /><circle cx="16" cy="17" r="7" fill="#d6d6d6" stroke="#999" /><text x="13" y="21" fontSize="11" fontFamily="Noto Sans, sans-serif" fill="#111">2</text></Svg></button>
      </div>
    </footer>
  );
}

export default function App() {
  return (
    <div className="flex min-h-screen flex-col overflow-hidden border-x border-[#111] bg-white font-['Open_Sans','Noto_Sans',sans-serif]">
      <div className="relative flex flex-1 flex-col overflow-hidden border-t border-[#999] pl-1">
        {/* title bar */}
        <header className="flex h-[31px] shrink-0 items-center text-[11px] text-[#111]">
          <div className="flex w-[420px] shrink-0 items-center">
            <span className="pl-[3px] text-[22px] leading-7 font-bold text-[#7f93a6]">NX</span>
            <span className="mx-1 h-5 w-px bg-[#ddd]" />
            <span className="ml-1"><Svg w={14}><path d="M1 1h14v14H1z" fill="#a8a8a8" /><path d="M4 1h8v6H4zM5 10h6v5H5z" fill="#eee" /></Svg></span>
            <span className="mx-[6px] h-5 w-px bg-[#ddd]" />
            <Svg w={14} stroke="#b5b5b5" strokeWidth="2"><path d="M2 3v5h5M2 8q5-7 10-3t-3 9" /></Svg>
            <span className="ml-2"><Caret color="#999" /></span>
          </div>
          <button type="button" aria-label="Customize" className="ml-0.5 flex flex-col items-center gap-0.5"><span className="h-px w-[7px] bg-black" /><Caret /></button>
          <span className="ml-[303px] flex-1 whitespace-nowrap">NX 12 - Manufacturing</span>
          <span className="mr-[23px] text-[13px] font-extrabold text-[#0b9296]">SIEMENS</span>
          <div className="flex h-5 w-[51px] items-center justify-between overflow-hidden">
            <Svg w={9} vb="0 0 9 12" h={12} stroke="#222"><path d="M0 10.500h8" strokeWidth="1.500" /></Svg>
            <Svg w={12} vb="0 0 12 12" stroke="#222"><path d="M.5.5h11v10H.5z" /></Svg>
            <Svg w={6} h={12} vb="0 0 6 12" stroke="#222"><path d="M0 1l6 5-6 5" strokeWidth="1.300" /></Svg>
          </div>
        </header>

        {/* ribbon tabs */}
        <nav className="flex h-6 shrink-0 items-center bg-[#dcdcdc] text-xs text-[#222]">
          <div className="flex h-full w-[419px] shrink-0 items-center">
            <button type="button" className="h-full w-[55px] bg-[#55a0b8] text-white">File</button>
            <button type="button" className="ml-0.5 h-full w-[58px] border-t border-[#999] bg-white text-[#1f5568]">Home</button>
          </div>
          <span>r</span>
          <button type="button" className="ml-[23px]">Tools</button>
          <button type="button" className="ml-6">Application</button>
          <button type="button" className="ml-[23px] whitespace-nowrap">Easy Fill Advanced</button>
          <button type="button" className="ml-[23px]">NXL_Tools</button>
          <div className="ml-auto flex items-center gap-[11px]">
            <label className="flex h-4 w-[105px] items-center border border-[#aaa] bg-white pr-0.5">
              <input aria-label="Find a Command" placeholder="Find a Command" className="w-0 flex-1 pl-[3px] text-[10px] placeholder:text-[#a5a5a5]" />
              <Svg w={14} stroke="#333"><circle cx="10" cy="6" r="5" /><circle cx="10" cy="6" r="2.500" stroke="#888" /><path d="M6.500 9.500L1 15" strokeWidth="2" /></Svg>
            </label>
            <Svg w={15}><path d="M1 4V1h3M12 1h3v3M15 12v3h-3M4 15H1v-3" stroke="#555" /><path d="M3 3h10v10H3z" fill="#fff" stroke="#333" /><path d="M5 5h6v6H5z" fill="#2a74c8" /></Svg>
            <Svg w={12} vb="0 0 12 12" stroke="#222"><path d="M1 6l5-4 5 4M1 11l5-4 5 4" strokeWidth="1.300" /></Svg>
            <Svg w={13}><circle cx="8" cy="8" r="7.500" fill="#3a63b8" /><path d="M5.500 6q0-3 2.500-3t2.500 2.500Q10.500 7 8 9M8 11v2" stroke="#fff" strokeWidth="1.800" /></Svg>
            <a href="#tutorials" className="flex items-center gap-1 text-[11px]"><Svg w={14}><path d="M0 7l7-4 9 3-5 4z" fill="#111" /><path d="M4 8v3q4 3 7 0V9M15 6v5l-2 3" stroke="#223a80" fill="#334" /></Svg><span>Tutorial</span></a>
          </div>
        </nav>

        {/* ribbon */}
        <div className="flex h-[81px] shrink-0 border-b border-[#ddd]">
          <Group label="Insert" caret={false} className="w-[419px] border-r-0" labelClass="flex-none pl-[73px]">
            <Big off icon={<ToolBlock />} lines={["Create", "Tool"]} className="w-[54px]" />
            <Big off icon={<GeoBlock />} lines={["Create", "Geometry"]} className="-ml-2 w-12" />
            <Big off icon={<DocIcon />} lines={["Create", "Operation"]} className="ml-1.5 w-[54px]" />
          </Group>
          <Group label="ations" className="w-[180px]" labelClass="text-left">
            <Big off icon={<PostIcon />} lines={["Post", "Process"]} className="ml-1 w-12" />
            <Big off icon={<DocIcon />} lines={["Shop", "Documentation"]} className="w-[72px]" />
            <More icon={<MoreMachining />} className="ml-1.5" />
          </Group>
          <Group label="Display" className="w-[117px]">
            <div className="grid grid-cols-3 gap-x-[3px] gap-y-[5px] pl-2.5">
              {smallDisplay.map((ic, i) => (
                <button key={i} type="button" aria-label={`Display ${i + 1}`} className="flex w-8 items-center gap-[5px]">{ic}{[0, 1, 5, 8].includes(i) && <Caret />}</button>
              ))}
            </div>
          </Group>
          <Group label="Workpiece" className="w-[111px]">
            <div className="grid grid-cols-2 gap-x-[7px] gap-y-[5px] pl-3">
              {[0, 1, 2, 3, 4, 5].map((i) => <button key={i} type="button" aria-label={`Workpiece ${i + 1}`}><Funnel arrow={i < 4} hatch={i % 2 === 1} tail={i !== 2} /></button>)}
            </div>
            <Big icon={<IpwIcon />} lines={["Show", "3D IPW"]} caret className="w-12" />
          </Group>
          <Group label="Analysis" className="w-[69px]">
            <Big icon={<DraftIcon />} lines={["Draft", "Analysis"]} caret className="w-[68px]" />
          </Group>
          <Group label="Geometry" className="w-[114px]">
            <Big icon={<PointIcon />} lines={["Point"]} caret className="ml-2 w-9" />
            <Big icon={<ExtractIcon />} lines={["Extract", "Geometry"]} caret className="w-[58px]" />
          </Group>
          <Group label="Synchronous Mod..." className="w-[116px]">
            <Big off icon={<MoveFace />} lines={["Move", "Face"]} className="ml-2 w-9" />
            <div className="flex flex-col gap-[5px] pl-px"><SmallCube kind={0} /><SmallCube kind={1} /><SmallCube kind={2} /></div>
            <More icon={<SyncIcon />} className="ml-1.5" />
          </Group>
          <Group label="Feature" className="w-[84px]">
            <div className="flex flex-col gap-2 pl-[11px]"><FeatTop /><FeatBottom /></div>
            <More icon={<FeatIcon />} className="ml-1" />
          </Group>
          <section className="flex w-10 shrink-0 justify-center border-r border-[#dcdcdc] pt-2">
            <Big icon={<ToolsIcon />} lines={["Tools"]} caret />
          </section>
        </div>

        {/* selection toolbar */}
        <div className="flex h-[27px] shrink-0 items-center border-b border-[#999] text-[11px]">
          <div className="flex w-[419px] shrink-0 items-center">
            <Svg className="ml-2"><path d="M1 2h13M1 5h13M1 8h6M1 11h6" stroke="#4a63a8" strokeWidth="1.500" /><path d="M8 6v8l2-2 3 3 1-1-2-3h3z" fill="#fff" stroke="#222" /></Svg>
            <button type="button" className="ml-1 flex items-center gap-1 text-[#111]"><span><u>M</u>enu</span><Caret /></button>
            <VBar />
            <Cell label="Tree">{quick.tree}</Cell><Cell label="Tree items">{quick.tree}</Cell>
          </div>
          <select aria-label="Assembly scope" disabled className="h-[17px] w-[70px] shrink-0 appearance-none border border-l-0 border-[#aaa] bg-white text-[11px] leading-3 text-[#aaa] opacity-100"><option>sembly</option></select>
          <span className="-ml-3 mr-2.5"><Caret color="#999" /></span>
          <Cell label="Filter">{quick.sel}</Cell><Cell label="Reset filter">{quick.hook}</Cell><Cell label="Snap">{quick.boxed}</Cell><Drop />
          <Cell label="Orient">{quick.arc}</Cell><Cell label="Route">{quick.pipe}</Cell><Cell label="Polygon">{quick.hex}</Cell><Cell label="Cloud">{quick.dots}</Cell><Cell label="Rectangle">{quick.rect}</Cell><Drop />
          <span className="w-1" /><Cell label="Faces">{quick.gcube}</Cell><Cell label="Body"><Cube /></Cell><VBar />
          <Cell label="Fit">{quick.fit}</Cell><Cell label="Pan">{quick.hand}</Cell><Cell label="Rotate">{quick.rot}</Cell><Cell label="Edit">{quick.pen}</Cell><Cell label="Copy">{quick.gdoc}</Cell>
          <Cell label="Window">{quick.grid}</Cell><Drop wide /><Cell label="Render">{quick.dark}</Cell><Drop wide /><Cell label="View"><Cube a="#b8c4f4" b="#8499e6" c="#5670cc" /></Cell><Drop wide /><Cell label="Section">{quick.tri}</Cell><Drop wide /><VBar />
        </div>

        {/* body */}
        <div className="flex min-h-0 flex-1">
          <aside className="flex w-[30px] shrink-0 flex-col bg-[#dcdcdc]">
            {barIcons.map(([name, h, icon, active]) => (
              <button key={name} type="button" aria-label={name} className={clsx("flex w-full shrink-0 items-center justify-center", h, active && "ml-px bg-white")}>{icon}</button>
            ))}
            <div className="mt-5 flex flex-col items-center gap-2">
              <Svg w={26} h={8} vb="0 0 26 8"><path d="M0 4q6 4 12 0t13-1" stroke="#666" strokeWidth="1.500" /></Svg>
              <Svg w={6} h={5} vb="0 0 6 5"><path d="M0 3l3-3 3 3zM0 4h6v1H0z" fill="#aaa" /></Svg>
              <Svg w={6} h={3} vb="0 0 6 3"><path d="M0 3l3-3 3 3z" fill="#aaa" /></Svg>
            </div>
          </aside>
          <section className="ml-[5px] flex w-[384px] shrink-0 flex-col border-l border-[#ccc] text-[11px] text-[#111]">
            <h2 className="flex h-[29px] shrink-0 items-center pl-[3px]">Operation Navigator</h2>
            <div className="flex h-[18px] shrink-0 items-center border-y border-[#ddd] bg-[#f2f2f2] pl-[7px]">Name</div>
            <ul className="grid min-h-0 flex-1 auto-rows-fr leading-4">
              <li className="flex min-h-0 items-center border-b border-[#ececec] pl-1">GEOMETRY</li>
              <li className="flex min-h-0 items-center border-b border-[#ececec] pl-[10px]">
                <span className="w-2.5 border-t border-dotted border-[#999]" />
                <Svg w={13} h={12} vb="0 0 13 12"><path d="M.5 2V.5h5L7 2h5.500v9.500H.500z" fill="#ffe98a" stroke="#8a7420" /><path d="M5 4h5v6H5zM6 5.500h4M6 8h4" fill="#fff" stroke="#236" /></Svg>
                <span className="ml-1 whitespace-nowrap">Unused Items</span>
              </li>
              <li className="flex min-h-0 items-center border-b border-[#ececec] pl-[7px]">
                <Minus /><span className="w-1.5 border-t border-dotted border-[#999]" />
                <Svg w={15}><path d="M4 12V2M2 4l2-3 2 3" stroke="#1a2a9a" strokeWidth="1.500" /><path d="M4 12l8 3M4 12l9-6" stroke="#2a9a3a" strokeWidth="1.500" /><path d="M4 12l6 2" stroke="#c22" strokeWidth="2" /><path d="M8 1h3L8 4h3M12 3l1.500 2L15 3M13.500 5v2M11 11l3 4M14 11l-3 4" stroke="#111" /></Svg>
                <span className="ml-0.5 whitespace-nowrap">MCS_MILL</span>
              </li>
              <li className="flex min-h-0 items-center border-b border-[#ececec] pl-6">
                <Minus /><span className="w-[7px] border-t border-dotted border-[#999]" />
                <Svg w={14}><path d="M1 5l7-4 7 4v6l-7 4-7-4z" fill="#8ca8ee" stroke="#3a50b0" /><path d="M1 5l7 3 7-3M8 8v7M5 3l6 4" stroke="#3a50b0" /></Svg>
                <span className="flex h-full flex-1 items-center bg-[#79b3c5] pl-[3px]">WORKPIECE</span>
              </li>
              {Array.from({ length: 19 }, (_, i) => <OpRow key={i} />)}
            </ul>
            <div className="flex h-[14px] shrink-0 items-center bg-[#f0f0f0] pl-1.5">
              <Svg w={7} vb="0 0 7 9" h={9} stroke="#222"><path d="M6 1L2 4.500 6 8" strokeWidth="1.600" /></Svg>
              <span className="ml-[5px] h-full flex-1 bg-[#c8c8c8]" />
            </div>
            <div className="mt-[3px] h-[5px] shrink-0 border-y border-[#aaa] bg-[#ddd]" />
            <div className="flex h-[22px] shrink-0 items-center border-b border-[#ccc] pl-1.5 text-xs text-[#1f6273]">Dependencies</div>
          </section>
          <main className="flex min-w-0 flex-1 flex-col">
            <div className="flex h-5 shrink-0 border-b-2 border-[#4f97ab]">
              <div className="flex h-full w-[38px] items-center gap-1.5 bg-[#55a0b8] pl-[9px]">
                <Svg w={9} vb="0 0 10 12" h={11} stroke="#fff"><path d="M6 1H1v10h6V8M4 6h5M7 4l2 2-2 2M6 1l2 2" strokeWidth="1.500" /></Svg>
                <Svg w={8} vb="0 0 8 8" stroke="#c9c9c9"><path d="M1 1l6 6M7 1L1 7" strokeWidth="1.800" /></Svg>
              </div>
            </div>
            <div className="min-h-0 flex-1"><Scene /></div>
          </main>
        </div>
        <Dialog />
      </div>
      <Taskbar />
    </div>
  );
}
